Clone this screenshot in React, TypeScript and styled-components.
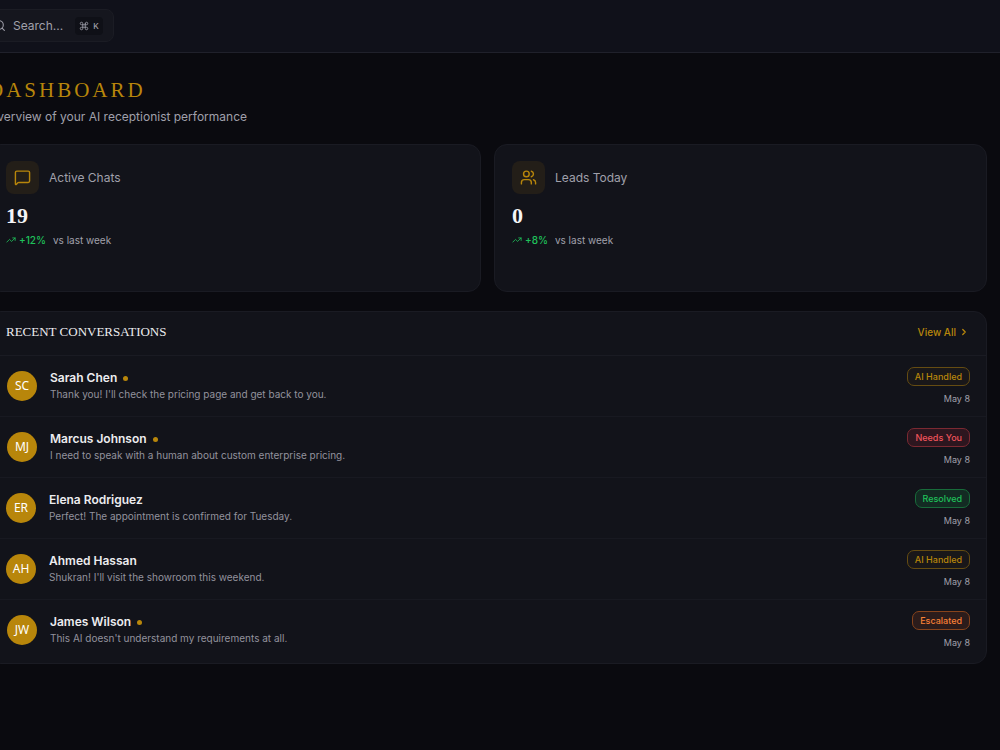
import React from "react";
import styled, { createGlobalStyle } from "styled-components";
import { ChevronRight, Command, MessageSquare, Search, TrendingUp, Users } from "lucide-react";

const GlobalStyle = createGlobalStyle`
  * { box-sizing: border-box; }
  body {
    margin: 0;
    background: #0a0a0f;
    color: #ececef;
    font-family: Inter, "Liberation Sans", sans-serif;
    overflow-x: hidden;
  }
  h1, h2, p, ul { margin: 0; padding: 0; }
`;

const gold = "#b8860b";
const muted = "#a0a0ab";
const line = "#1a1b23";
const serif = `"Liberation Serif", serif`;

const Shell = styled.div`
  min-height: 100vh;
  overflow: hidden;
`;

const TopBar = styled.header`
  display: flex;
  align-items: flex-start;
  height: 53px;
  padding-top: 9px;
  background: #10111a;
  border-bottom: 1px solid #20212b;
`;

const SearchButton = styled.button`
  display: flex;
  align-items: center;
  gap: 7px;
  height: 33px;
  margin-left: -19px;
  padding: 0 10px 0 11px;
  border: 1px solid #1b1c24;
  border-radius: 8px;
  background: #15161e;
  color: ${muted};
  font: 400 12px/16px Inter, sans-serif;
`;

const Shortcut = styled.kbd`
  display: flex;
  align-items: center;
  gap: 4px;
  height: 18px;
  margin-left: 5px;
  padding: 0 4px;
  border-radius: 4px;
  background: #0f1017;
  font: 500 8px/12px Inter, sans-serif;
`;

const Main = styled.main`
  display: flex;
  flex-direction: column;
  gap: 19px;
  margin-left: -12px;
  padding: 24px 13px 20px 0;
`;

const Title = styled.h1`
  color: ${gold};
  font: 400 21px/26px ${serif};
  letter-spacing: 3px;
`;

const Subtitle = styled.p`
  margin-top: 6px;
  color: ${muted};
  font-size: 12px;
  line-height: 16px;
`;

const Stats = styled.section`
  display: grid;
  grid-template-columns: 1fr 1fr;
  gap: 13px;
`;

const StatCard = styled.article`
  height: 148px;
  padding: 16px 17px;
  border: 1px solid ${line};
  border-radius: 13px;
  background: #12131a;
`;

const StatHead = styled.div`
  display: flex;
  align-items: center;
  gap: 10px;
  color: ${muted};
  font-size: 12px;
  line-height: 16px;
`;

const IconTile = styled.span`
  display: grid;
  place-items: center;
  width: 33px;
  height: 33px;
  border-radius: 8px;
  background: #231e18;
  color: ${gold};
`;

const StatValue = styled.p`
  margin-top: 8px;
  color: #f5f5f7;
  font: 700 22px/28px ${serif};
`;

const Trend = styled.p`
  display: flex;
  align-items: center;
  gap: 7px;
  margin-top: 3px;
  color: ${muted};
  font-size: 10px;
  line-height: 14px;
`;

const TrendUp = styled.span`
  display: flex;
  align-items: center;
  gap: 3px;
  color: #1fc15a;
  font-weight: 500;
`;

const Panel = styled.section`
  overflow: hidden;
  border: 1px solid ${line};
  border-radius: 13px;
  background: #12131a;
`;

const PanelHead = styled.div`
  display: flex;
  align-items: center;
  justify-content: space-between;
  height: 44px;
  padding: 0 17px 3px;
  border-bottom: 1px solid ${line};
`;

const PanelTitle = styled.h2`
  font: 400 13px/16px ${serif};
`;

const ViewAll = styled.a`
  display: flex;
  align-items: center;
  gap: 3px;
  color: ${gold};
  font-size: 10px;
  font-weight: 500;
  line-height: 14px;
  text-decoration: none;
`;

const List = styled.ul`
  list-style: none;
  padding-bottom: 2px;
`;

const Row = styled.li<{ $unread: boolean }>`
  display: flex;
  align-items: center;
  gap: 13px;
  height: 61px;
  padding: 0 16px 0 ${(p) => (p.$unread ? 18 : 17)}px;
  border-bottom: 1px solid #181921;

  &:last-child { border-bottom-color: transparent; }
`;

const Avatar = styled.span`
  display: grid;
  place-items: center;
  width: 30px;
  height: 30px;
  border-radius: 50%;
  background: ${gold};
  color: #fff;
  font: 400 12px/16px "Noto Sans", sans-serif;
`;

const Person = styled.div`
  flex: 1;
  min-width: 0;
`;

const Name = styled.p`
  display: flex;
  align-items: center;
  gap: 6px;
  font-size: 12px;
  font-weight: 600;
  line-height: 16px;
`;

const UnreadDot = styled.span`
  width: 5px;
  height: 5px;
  border-radius: 50%;
  background: ${gold};
`;

const Message = styled.p`
  color: #92929d;
  font-size: 10px;
  line-height: 16px;
`;

const Status = styled.div`
  display: flex;
  flex-direction: column;
  align-items: flex-end;
  gap: 7px;
`;

const tones = {
  gold: { color: "#b8860b", border: "#654c12", fill: "#191719" },
  red: { color: "#f0545c", border: "#7b2932", fill: "#2d161f" },
  green: { color: "#1fc15a", border: "#186b3a", fill: "#132b23" },
  orange: { color: "#f98036", border: "#87431b", fill: "#2c1c1b" },
};

const Badge = styled.span<{ $tone: keyof typeof tones }>`
  padding: 2px 7px;
  border: 1px solid ${(p) => tones[p.$tone].border};
  border-radius: 7px;
  background: ${(p) => tones[p.$tone].fill};
  color: ${(p) => tones[p.$tone].color};
  font-size: 9px;
  font-weight: 500;
  line-height: 13px;
`;

const DateText = styled.time`
  color: ${muted};
  font-size: 9px;
  line-height: 12px;
`;

const stats = [
  { label: "Active Chats", value: "19", change: "+12%", Icon: MessageSquare },
  { label: "Leads Today", value: "0", change: "+8%", Icon: Users },
];

type Conversation = {
  initials: string;
  name: string;
  message: string;
  status: string;
  tone: keyof typeof tones;
  unread: boolean;
};

const conversations: Conversation[] = [
  { initials: "SC", name: "Sarah Chen", message: "Thank you! I'll check the pricing page and get back to you.", status: "AI Handled", tone: "gold", unread: true },
  { initials: "MJ", name: "Marcus Johnson", message: "I need to speak with a human about custom enterprise pricing.", status: "Needs You", tone: "red", unread: true },
  { initials: "ER", name: "Elena Rodriguez", message: "Perfect! The appointment is confirmed for Tuesday.", status: "Resolved", tone: "green", unread: false },
  { initials: "AH", name: "Ahmed Hassan", message: "Shukran! I'll visit the showroom this weekend.", status: "AI Handled", tone: "gold", unread: false },
  { initials: "JW", name: "James Wilson", message: "This AI doesn't understand my requirements at all.", status: "Escalated", tone: "orange", unread: true },
];

export default function App() {
  return (
    <Shell>
      <GlobalStyle />
      <TopBar>
        <SearchButton type="button">
          <Search size={13} />
          <span>Search...</span>
          <Shortcut>
            <Command size={10} />
            <span>K</span>
          </Shortcut>
        </SearchButton>
      </TopBar>
      <Main>
        <div>
          <Title>DASHBOARD</Title>
          <Subtitle>Overview of your AI receptionist performance</Subtitle>
        </div>
        <Stats>
          {stats.map(({ label, value, change, Icon }) => (
            <StatCard key={label}>
              <StatHead>
                <IconTile><Icon size={17} /></IconTile>
                <span>{label}</span>
              </StatHead>
              <StatValue>{value}</StatValue>
              <Trend>
                <TrendUp><TrendingUp size={10} />{change}</TrendUp>
                <span>vs last week</span>
              </Trend>
            </StatCard>
          ))}
        </Stats>
        <Panel>
          <PanelHead>
            <PanelTitle>RECENT CONVERSATIONS</PanelTitle>
            <ViewAll href="#conversations">View All <ChevronRight size={10} strokeWidth={3} /></ViewAll>
          </PanelHead>
          <List>
            {conversations.map((c) => (
              <Row key={c.name} $unread={c.unread}>
                <Avatar>{c.initials}</Avatar>
                <Person>
                  <Name>{c.name}{c.unread && <UnreadDot />}</Name>
                  <Message>{c.message}</Message>
                </Person>
                <Status>
                  <Badge $tone={c.tone}>{c.status}</Badge>
                  <DateText>May 8</DateText>
                </Status>
              </Row>
            ))}
          </List>
        </Panel>
      </Main>
    </Shell>
  );
}
